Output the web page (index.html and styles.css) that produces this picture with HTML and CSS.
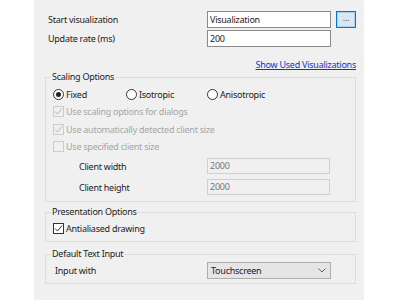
FILE: index.html
```html
<!DOCTYPE html>
<html>
<head>
    <title>Visualization Options</title>
    <meta charset="UTF-8">
    <link rel="stylesheet" href="styles.css">
</head>
<body>
    <div class="panel">
        <div class="row">
            <span class="label">Start visualization</span>
            <span class="field">Visualization</span>
            <span class="browse">...</span>
        </div>
        <div class="row second">
            <span class="label">Update rate (ms)</span>
            <span class="field">200</span>
        </div>
        <div class="link-row">
            <a class="link" href="#">Show Used Visualizations</a>
        </div>

        <!-- Scaling Options -->
        <fieldset class="group scaling">
            <legend>Scaling Options</legend>
            <div class="radios">
                <span class="opt"><span class="radio on"></span>Fixed</span>
                <span class="opt"><span class="radio"></span>Isotropic</span>
                <span class="opt"><span class="radio"></span>Anisotropic</span>
            </div>
            <div class="opt check-row disabled">
                <span class="box"><svg width="9" height="9" viewBox="0 0 9 9"><polyline points="1,4.5 3.5,7 8,1.5" fill="none" stroke="#b5b5b5" stroke-width="1"/></svg></span>Use scaling options for dialogs
            </div>
            <div class="opt check-row disabled">
                <span class="box"><svg width="9" height="9" viewBox="0 0 9 9"><polyline points="1,4.5 3.5,7 8,1.5" fill="none" stroke="#b5b5b5" stroke-width="1"/></svg></span>Use automatically detected client size
            </div>
            <div class="opt check-row disabled">
                <span class="box"></span>Use specified client size
            </div>
            <div class="sub-row">
                <span class="label">Client width</span>
                <span class="field off">2000</span>
            </div>
            <div class="sub-row">
                <span class="label">Client height</span>
                <span class="field off">2000</span>
            </div>
        </fieldset>

        <!-- Presentation Options -->
        <fieldset class="group presentation">
            <legend>Presentation Options</legend>
            <div class="opt check-row">
                <span class="box"><svg width="9" height="9" viewBox="0 0 9 9"><polyline points="1,4.5 3.5,7 8,1.5" fill="none" stroke="#333" stroke-width="1"/></svg></span>Antialiased drawing
            </div>
        </fieldset>

        <!-- Default Text Input -->
        <fieldset class="group text-input">
            <legend>Default Text Input</legend>
            <div class="input-row">
                <span class="label">Input with</span>
                <span class="select">Touchscreen<svg class="chev" width="8" height="5" viewBox="0 0 8 5"><polyline points="0.5,0.5 4,4 7.5,0.5" fill="none" stroke="#666" stroke-width="1"/></svg></span>
            </div>
        </fieldset>
    </div>
</body>
</html>
```

FILE: styles.css
```css
body {
    margin: 0;
    background-color: #fff;
    font-family: "Noto Sans", "Open Sans", sans-serif;
    font-size: 9px;
    letter-spacing: -0.25px;
    color: #222;
}
.panel {
    margin-left: 34px;
    width: 330px;
    height: 300px;
    box-sizing: border-box;
    padding: 11px 8px 0 11px;
    background-color: #f0f0f0;
}
.row {
    display: grid;
    grid-template-columns: 157px 124px 20px;
    column-gap: 5px;
    align-items: center;
    height: 17px;
}
.row.second {
    margin-top: 2px;
}
.row .label {
    padding-left: 3px;
}
.field {
    box-sizing: border-box;
    height: 17px;
    line-height: 15px;
    padding-left: 2px;
    border: 1px solid #8a8a8a;
    background-color: #fff;
    white-space: nowrap;
}
.field.off {
    width: 123px;
    height: 16px;
    line-height: 14px;
    border-color: #d0d0d0;
    background-color: #f0f0f0;
    color: #777;
}
.browse {
    box-sizing: border-box;
    height: 17px;
    line-height: 12px;
    text-align: center;
    color: #555;
    border: 1px solid #0078d7;
    box-shadow: inset 0 0 0 1px #a8d0f0;
    background-color: #dde6ee;
}
.link-row {
    margin-top: 12px;
    height: 12px;
    line-height: 12px;
    text-align: right;
}
.link {
    color: #0a38c8;
    text-decoration: underline;
}
.group {
    margin: 0;
    border: 1px solid #dcdcdc;
    padding: 2px 7px 6px 7px;
}
.group legend {
    padding: 0 1px;
    margin-left: -2px;
    line-height: 12px;
}
.presentation {
    margin-top: 4px;
    padding-top: 1px;
    padding-bottom: 4px;
}
.text-input {
    margin-top: 6px;
    padding-top: 2px;
    padding-bottom: 4px;
}
.radios {
    display: grid;
    grid-template-columns: 73px 81px auto;
    height: 18px;
    align-items: center;
}
.opt {
    display: flex;
    align-items: center;
    gap: 2px;
    white-space: nowrap;
}
.radio {
    box-sizing: border-box;
    width: 11px;
    height: 11px;
    border: 1px solid #333;
    border-radius: 50%;
    background-color: #fff;
    display: flex;
    align-items: center;
    justify-content: center;
}
.radio.on::after {
    content: "";
    width: 5px;
    height: 5px;
    border-radius: 50%;
    background-color: #222;
}
.check-row {
    height: 17.5px;
}
.presentation .check-row {
    height: 18px;
}
.box {
    box-sizing: border-box;
    width: 11px;
    height: 11px;
    border: 1px solid #333;
    background-color: #fff;
    display: flex;
    align-items: center;
    justify-content: center;
}
.disabled {
    color: #a6a6a6;
}
.disabled .box {
    border-color: #cccccc;
    background-color: #f0f0f0;
}
.sub-row {
    display: grid;
    grid-template-columns: 154px auto;
    align-items: center;
    margin-top: 2.5px;
}
.sub-row + .sub-row {
    margin-top: 5px;
}
.sub-row .label {
    padding-left: 26px;
}
.input-row {
    display: grid;
    grid-template-columns: 154px 124px;
    align-items: center;
}
.input-row .label {
    padding-left: 2px;
}
.select {
    box-sizing: border-box;
    height: 17px;
    line-height: 15px;
    padding: 0 4px 0 3px;
    border: 1px solid #adadad;
    background-color: #e5e5e5;
    display: flex;
    justify-content: space-between;
    align-items: center;
}
```
